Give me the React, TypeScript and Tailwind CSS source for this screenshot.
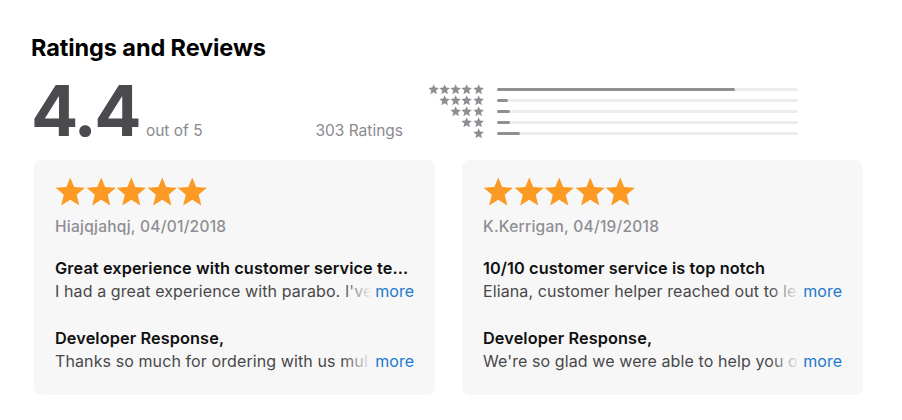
import React from 'react';

interface Review {
  author: string;
  date: string;
  title: string;
  body: string;
  response: string;
}

const reviews: Review[] = [
  {
    author: 'Hiajqjahqj',
    date: '04/01/2018',
    title: 'Great experience with customer service te...',
    body: "I had a great experience with parabo. I've",
    response: 'Thanks so much for ordering with us mul',
  },
  {
    author: 'K.Kerrigan',
    date: '04/19/2018',
    title: '10/10 customer service is top notch',
    body: 'Eliana, customer helper reached out to le',
    response: "We're so glad we were able to help you o",
  },
];

// share of ratings per star count, 5 down to 1
const histogram = [0.79, 0.037, 0.043, 0.043, 0.077];

// five-point star filling most of a 24x23 box
const STAR_POINTS = '12,0.3 15.1,7.9 23.6,8.6 17.1,14 19.2,22.6 12,18.1 4.8,22.6 6.9,14 0.4,8.6 8.9,7.9';

const Star: React.FC<{ className: string }> = ({ className }) => (
  <svg viewBox="0 0 24 23" className={className}>
    <polygon points={STAR_POINTS} fill="currentColor" />
  </svg>
);

const FadedLine: React.FC<{ text: string; className?: string }> = ({ text, className }) => (
  <div className="flex items-baseline leading-[23px]">
    <div className={`relative flex-1 overflow-hidden whitespace-nowrap ${className ?? ''}`}>
      {text}
      <div className="absolute inset-y-0 right-0 w-[30px] bg-gradient-to-r from-[#f7f7f7]/0 to-[#f7f7f7]" />
    </div>
    <span className="ml-[3px] text-[#2279cb]">more</span>
  </div>
);

const ReviewCard: React.FC<{ review: Review }> = ({ review }) => (
  <div className="w-[401px] h-[235px] rounded-[8px] bg-[#f7f7f7] px-[21px] pt-[17px]">
    <div className="flex text-[#fd9a24]">
      {[0, 1, 2, 3, 4].map((i) => (
        <Star key={i} className="w-[30.5px] h-[29px]" />
      ))}
    </div>
    <div className="mt-[11px] text-[15.5px] leading-[20px] font-medium tracking-[0.25px] text-[#8e8e93]">
      {review.author}, {review.date}
    </div>
    <div className="mt-[20px] text-[16px]">
      <div className="whitespace-nowrap text-[16.3px] font-semibold leading-[23px] tracking-[0.1px] text-[#111]">
        {review.title}
      </div>
      <FadedLine text={review.body} className="text-[#48484a] tracking-[0.1px]" />
    </div>
    <div className="mt-[24px] text-[16px]">
      <div className="whitespace-nowrap text-[16.3px] font-semibold leading-[23px] tracking-[0.1px] text-[#111]">
        Developer Response,
      </div>
      <FadedLine text={review.response} className="text-[#48484a] tracking-[0.1px]" />
    </div>
  </div>
);

export default function App() {
  return (
    <div
      className="w-[902px] h-[420px] bg-white pl-[31px] pt-[34px]"
      style={{ fontFamily: 'Inter, "Noto Sans", sans-serif' }}
    >
      <h2 className="text-[23.5px] leading-[28px] font-bold text-black tracking-[-0.1px]">
        Ratings and Reviews
      </h2>
      <div className="mt-[14px] flex items-start">
        <div className="w-[372px] flex items-baseline justify-between">
          <div className="flex items-baseline">
            <span className="text-[70px] leading-[70px] font-bold text-[#4a4a4f] tracking-[-2.6px]">4.4</span>
            <span className="ml-[7px] text-[15.5px] text-[#8a8a8e]">out of 5</span>
          </div>
          <span className="text-[15.5px] text-[#8a8a8e]">303 Ratings</span>
        </div>
        <div className="ml-[23px] mt-[8px] flex flex-col">
          {histogram.map((share, idx) => {
            const count = 5 - idx;
            return (
              <div key={count} className="flex items-center h-[11px]">
                <div className="w-[58px] flex justify-end text-[#8e8e93]">
                  {Array.from({ length: count }).map((_, i) => (
                    <Star key={i} className="w-[11.3px] h-[10.5px]" />
                  ))}
                </div>
                <div className="ml-[13px] w-[301px] h-[3px] rounded-full bg-[#ececf0]">
                  <div className="h-full rounded-full bg-[#8e8e93]" style={{ width: `${share * 100}%` }} />
                </div>
              </div>
            );
          })}
        </div>
      </div>
      <div className="mt-[14px] ml-[3px] flex gap-[27px]">
        {reviews.map((r) => (
          <ReviewCard key={r.author} review={r} />
        ))}
      </div>
    </div>
  );
}
